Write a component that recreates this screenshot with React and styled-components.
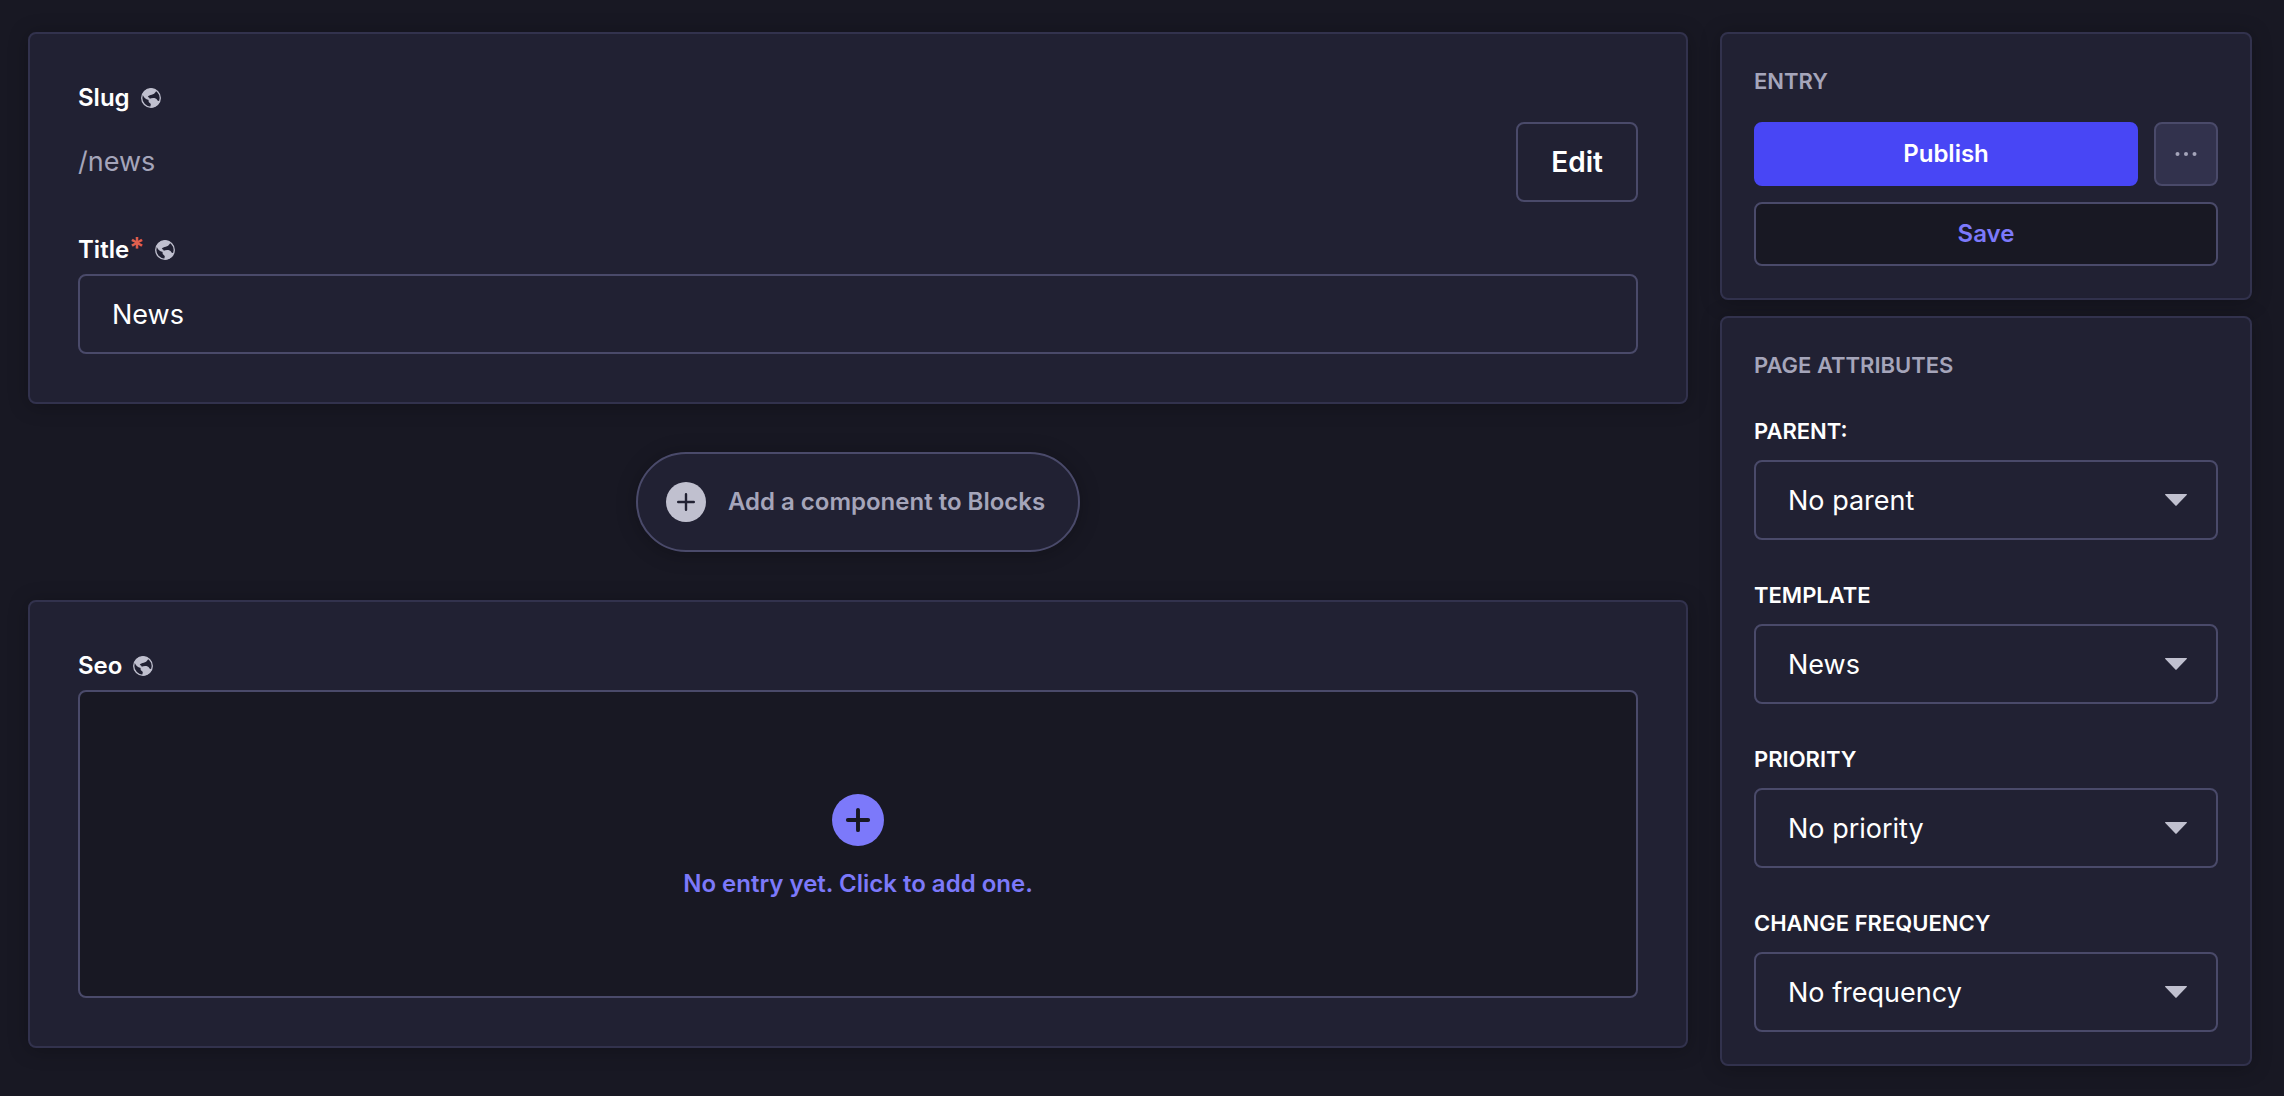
import React from "react";
import styled, { createGlobalStyle, css } from "styled-components";

const color = {
  page: "#181823",
  panel: "#212133",
  line: "#32324d",
  control: "#4a4a6a",
  muted: "#a5a5ba",
  icon: "#c0c0cf",
  white: "#ffffff",
  primary: "#4846f5",
  primarySoft: "#7c79fa",
  danger: "#e0604f",
};

const GlobalStyle = createGlobalStyle`
  *, *::before, *::after { box-sizing: border-box; }
  body {
    margin: 0;
    background: ${color.page};
    color: ${color.white};
    font-family: Inter, "Liberation Sans", sans-serif;
    -webkit-font-smoothing: antialiased;
  }
  button, input, select { font: inherit; color: inherit; margin: 0; }
`;

const Page = styled.div`
  display: grid;
  grid-template-columns: minmax(0, 1fr) 532px;
  gap: 32px;
  align-items: start;
  padding: 32px 32px 24px 28px;
`;

const Main = styled.main`
  display: flex;
  flex-direction: column;
  gap: 48px;
`;

const Sidebar = styled.aside`
  display: flex;
  flex-direction: column;
  gap: 16px;
`;

const Panel = styled.section`
  display: flex;
  flex-direction: column;
  padding: ${(p) => (p.$compact ? "32px" : "48px")};
  background: ${color.panel};
  border: 2px solid ${color.line};
  border-radius: 8px;
  box-shadow: 0 2px 20px rgba(3, 3, 5, 0.25);
`;

const Field = styled.div`
  display: flex;
  flex-direction: column;
  gap: 8px;
  margin-top: ${(p) => (p.$spaced ? "32px" : "0")};
`;

const LabelRow = styled.div`
  display: flex;
  align-items: center;
  gap: 11px;
`;

const labelText = css`
  font-size: 24px;
  line-height: 32px;
  font-weight: 600;
`;

const Label = styled.label`
  ${labelText}
`;

const LabelText = styled.span`
  ${labelText}
`;

const Required = styled.span`
  color: ${color.danger};
  font-size: 28px;
  line-height: 24px;
`;

const SlugRow = styled.div`
  display: flex;
  align-items: center;
  justify-content: space-between;
`;

const SlugValue = styled.span`
  font-size: 27px;
  line-height: 40px;
  color: ${color.muted};
`;

const controlBox = css`
  height: 80px;
  border: 2px solid ${color.control};
  border-radius: 8px;
  background: ${color.panel};
  color: ${color.white};
`;

const EditButton = styled.button`
  ${controlBox}
  padding: 0 33px;
  font-size: 28px;
  font-weight: 600;
`;

const TextInput = styled.input`
  ${controlBox}
  width: 100%;
  padding: 0 32px;
  font-size: 27px;
`;

const AddComponent = styled.button`
  align-self: center;
  display: flex;
  align-items: center;
  gap: 22px;
  height: 100px;
  padding: 0 33px 0 28px;
  border: 2px solid ${color.control};
  border-radius: 50px;
  background: ${color.panel};
  color: ${color.muted};
  ${labelText}
  box-shadow: 0 2px 20px rgba(3, 3, 5, 0.25);
`;

const EmptyEntry = styled.button`
  display: flex;
  flex-direction: column;
  align-items: center;
  justify-content: center;
  gap: 22px;
  height: 308px;
  padding: 6px 0 0;
  border: 2px solid ${color.control};
  border-radius: 8px;
  background: ${color.page};
  color: ${color.primarySoft};
  ${labelText}
`;

const SectionTitle = styled.h2`
  margin: 0;
  font-size: 22px;
  line-height: 30px;
  font-weight: 600;
  text-transform: uppercase;
  color: ${color.muted};
`;

const Actions = styled.div`
  display: grid;
  grid-template-columns: minmax(0, 1fr) 64px;
  gap: 16px;
  margin-top: 26px;
`;

const Action = styled.button`
  display: flex;
  align-items: center;
  justify-content: center;
  height: 64px;
  padding: 0;
  border: 2px solid ${color.control};
  border-radius: 8px;
  ${labelText}
  ${(p) =>
    p.$kind === "primary" &&
    css`
      background: ${color.primary};
      border-color: ${color.primary};
      color: ${color.white};
    `}
  ${(p) =>
    p.$kind === "more" &&
    css`
      background: ${color.line};
      color: ${color.muted};
    `}
  ${(p) =>
    p.$kind === "secondary" &&
    css`
      grid-column: 1 / -1;
      background: ${color.page};
      color: ${color.primarySoft};
    `}
`;

const Attributes = styled.div`
  display: flex;
  flex-direction: column;
  gap: 40px;
  margin-top: 36px;
`;

const Attribute = styled.div`
  display: flex;
  flex-direction: column;
  gap: 14px;
`;

const AttributeLabel = styled.label`
  font-size: 22px;
  line-height: 30px;
  font-weight: 600;
  text-transform: uppercase;
`;

const SelectBox = styled.div`
  display: grid;
  align-items: center;

  > * { grid-area: 1 / 1; }
  > svg { justify-self: end; margin-right: 31px; pointer-events: none; }
`;

const Select = styled.select`
  ${controlBox}
  width: 100%;
  padding: 0 72px 0 32px;
  font-size: 27px;
  appearance: none;
`;

const Globe = () => (
  <svg width="20" height="20" viewBox="0 0 20 20" aria-hidden="true">
    <circle cx="10" cy="10" r="9.3" fill="none" stroke={color.icon} strokeWidth="1.3" />
    <path
      fill={color.icon}
      d="M1.5 6.5C3 2.5 6.5.5 10 .5c2 0 3.800.6 5.300 1.600-.1 1.500-.9 2.700-2.200 3.600-1.500 1-3.200 1-4.700 1.700-.9.4-1.600 1-1.600 1.600.9.200 1.800.7 1.900 1.800 1-.6 2.200-.7 3.500-.7 1.700 0 3.300.5 4 1.800.3.700 1.100.9 2.600 1.100-1 3.200-3.600 5.600-6.800 6.400-1.200.1-2.200 0-2.800-.3.100-1.200.8-2.200.5-3.100-.5-1-2-1-2.100-2.400 0-.8.2-1.300-.3-1.800-1.500-.4-3-1-4-2.300C2.600 8.600 2 7.400 1.500 6.500Z"
    />
  </svg>
);

const PlusCircle = ({ size, fill, cross, weight }) => (
  <svg width={size} height={size} viewBox="0 0 40 40" aria-hidden="true">
    <circle cx="20" cy="20" r="20" fill={fill} />
    <path d="M20 12.200v15.600M12.200 20h15.600" stroke={cross} strokeWidth={weight} strokeLinecap="round" />
  </svg>
);

const Dots = () => (
  <svg width="22" height="4" viewBox="0 0 22 4" fill="currentColor" aria-hidden="true">
    <circle cx="2.500" cy="2" r="2" />
    <circle cx="11" cy="2" r="2" />
    <circle cx="19.500" cy="2" r="2" />
  </svg>
);

const Caret = () => (
  <svg width="22" height="12" viewBox="0 0 22 12" aria-hidden="true">
    <path d="M.5 0h21q.8.4.2 1L11.600 11.600q-.6.600-1.200 0L.3 1q-.6-.6.2-1Z" fill={color.icon} />
  </svg>
);

const attributes = [
  { id: "parent", label: "Parent:", value: "No parent" },
  { id: "template", label: "Template", value: "News" },
  { id: "priority", label: "Priority", value: "No priority" },
  { id: "frequency", label: "Change frequency", value: "No frequency" },
];

export default function App() {
  return (
    <>
      <GlobalStyle />
      <Page>
        <Main>
          <Panel>
            <Field>
              <LabelRow>
                <LabelText>Slug</LabelText>
                <Globe />
              </LabelRow>
              <SlugRow>
                <SlugValue>/news</SlugValue>
                <EditButton type="button">Edit</EditButton>
              </SlugRow>
            </Field>
            <Field $spaced>
              <LabelRow>
                <Label htmlFor="title">
                  Title<Required>*</Required>
                </Label>
                <Globe />
              </LabelRow>
              <TextInput id="title" type="text" defaultValue="News" />
            </Field>
          </Panel>
          <AddComponent type="button">
            <PlusCircle size={40} weight={2.4} fill={color.icon} cross={color.panel} />
            Add a component to Blocks
          </AddComponent>
          <Panel>
            <Field>
              <LabelRow>
                <LabelText>Seo</LabelText>
                <Globe />
              </LabelRow>
              <EmptyEntry type="button">
                <PlusCircle size={52} weight={3} fill={color.primarySoft} cross={color.page} />
                No entry yet. Click to add one.
              </EmptyEntry>
            </Field>
          </Panel>
        </Main>
        <Sidebar>
          <Panel $compact>
            <SectionTitle>Entry</SectionTitle>
            <Actions>
              <Action type="button" $kind="primary">Publish</Action>
              <Action type="button" $kind="more" aria-label="More actions">
                <Dots />
              </Action>
              <Action type="button" $kind="secondary">Save</Action>
            </Actions>
          </Panel>
          <Panel $compact>
            <SectionTitle>Page attributes</SectionTitle>
            <Attributes>
              {attributes.map(({ id, label, value }) => (
                <Attribute key={id}>
                  <AttributeLabel htmlFor={id}>{label}</AttributeLabel>
                  <SelectBox>
                    <Select id={id} defaultValue={value}>
                      <option>{value}</option>
                    </Select>
                    <Caret />
                  </SelectBox>
                </Attribute>
              ))}
            </Attributes>
          </Panel>
        </Sidebar>
      </Page>
    </>
  );
}
